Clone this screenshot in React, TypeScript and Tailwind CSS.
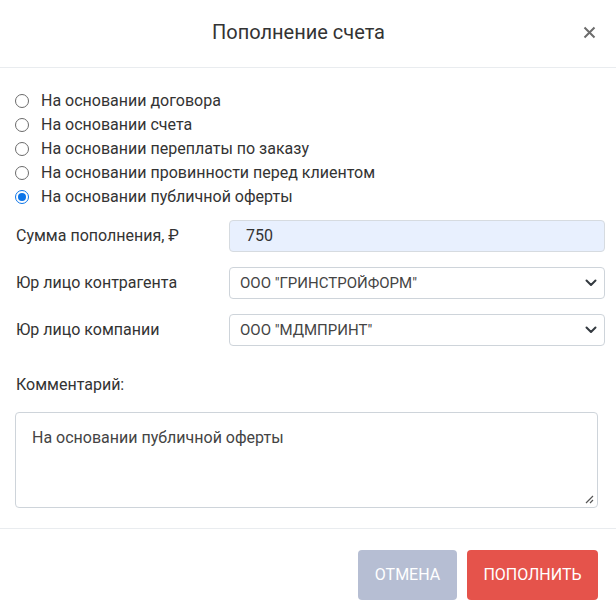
import { useState } from "react";

const options = [
  "На основании договора",
  "На основании счета",
  "На основании переплаты по заказу",
  "На основании провинности перед клиентом",
  "На основании публичной оферты",
];

function Chevron() {
  return (
    <svg width="12" height="8" viewBox="0 0 12 8" className="absolute right-[7px] top-1/2 -translate-y-1/2">
      <path d="M1.5 1.5 6 6l4.5-4.5" fill="none" stroke="#343a40" strokeWidth="2" strokeLinecap="round" strokeLinejoin="round" />
    </svg>
  );
}

export default function App() {
  const [selected, setSelected] = useState(4);

  return (
    <div className="w-[616px] h-[613px] bg-white text-[#333] font-['Roboto',sans-serif] flex flex-col">
      {/* Header */}
      <div className="relative h-[68px] border-b border-[#e9ecef] flex items-center justify-center pr-[19px] pb-[4px]">
        <h2 className="text-[20px] text-[#333] leading-none">Пополнение счета</h2>
        <button className="absolute right-[19px] top-[24px] w-[16px] h-[16px] flex items-center justify-center">
          <svg width="13" height="13" viewBox="0 0 13 13">
            <path d="M1.5 1.5l10 10M11.5 1.5l-10 10" stroke="#6c6c6c" strokeWidth="2" />
          </svg>
        </button>
      </div>

      {/* Body */}
      <div className="flex-1 pl-[15px] pr-[11px] pt-[21px]">
        <div className="flex flex-col">
          {options.map((o, i) => (
            <label key={o} className="flex items-center h-[24px] text-[16px] cursor-pointer" onClick={() => setSelected(i)}>
              {selected === i ? (
                <span className="w-[14px] h-[14px] rounded-full border-[1.5px] border-[#0b74e8] flex items-center justify-center">
                  <span className="w-[8px] h-[8px] rounded-full bg-[#0b74e8]" />
                </span>
              ) : (
                <span className="w-[14px] h-[14px] rounded-full border border-[#6b6b6b]" />
              )}
              <span className="ml-[12px]">{o}</span>
            </label>
          ))}
        </div>

        <div className="mt-[11px] flex flex-col gap-[15px]">
          <div className="flex items-center">
            <span className="w-[214px] pl-[1px] text-[16px]">Сумма пополнения, ₽</span>
            <div className="flex-1 h-[32px] rounded-[4px] border border-[#d6dbe0] bg-[#e8f0fe] flex items-center pl-[16px] text-[16px]">
              750
            </div>
          </div>
          <div className="flex items-center">
            <span className="w-[214px] pl-[1px] text-[16px]">Юр лицо контрагента</span>
            <div className="relative flex-1 h-[32px] rounded-[4px] border border-[#ced4da] bg-white flex items-center pl-[10px] text-[15px] text-[#444]">
              ООО "ГРИНСТРОЙФОРМ"
              <Chevron />
            </div>
          </div>
          <div className="flex items-center">
            <span className="w-[214px] pl-[1px] text-[16px]">Юр лицо компании</span>
            <div className="relative flex-1 h-[32px] rounded-[4px] border border-[#ced4da] bg-white flex items-center pl-[10px] text-[15px] text-[#444]">
              ООО "МДМПРИНТ"
              <Chevron />
            </div>
          </div>
        </div>

        <div className="mt-[27px] pl-[1px] text-[16px]">Комментарий:</div>
        <div className="relative mt-[15px] mr-[7px] h-[96px] rounded-[4px] border border-[#ced4da] px-[16px] pt-[13px] text-[16px] text-[#444]">
          На основании публичной оферты
          <svg width="9" height="9" viewBox="0 0 9 9" className="absolute right-[3px] bottom-[3px]">
            <path d="M8 1 1 8M8 5 5 8" stroke="#555" strokeWidth="1.2" />
          </svg>
        </div>
      </div>

      {/* Footer */}
      <div className="h-[85px] border-t border-[#e9ecef] flex justify-end items-start pt-[21px] pr-[18px] gap-[10px]">
        <button className="w-[99px] h-[50px] rounded-[4px] bg-[#b6bed3] text-white text-[16px]">ОТМЕНА</button>
        <button className="w-[131px] h-[50px] rounded-[4px] bg-[#e5534b] text-white text-[16px]">ПОПОЛНИТЬ</button>
      </div>
    </div>
  );
}
